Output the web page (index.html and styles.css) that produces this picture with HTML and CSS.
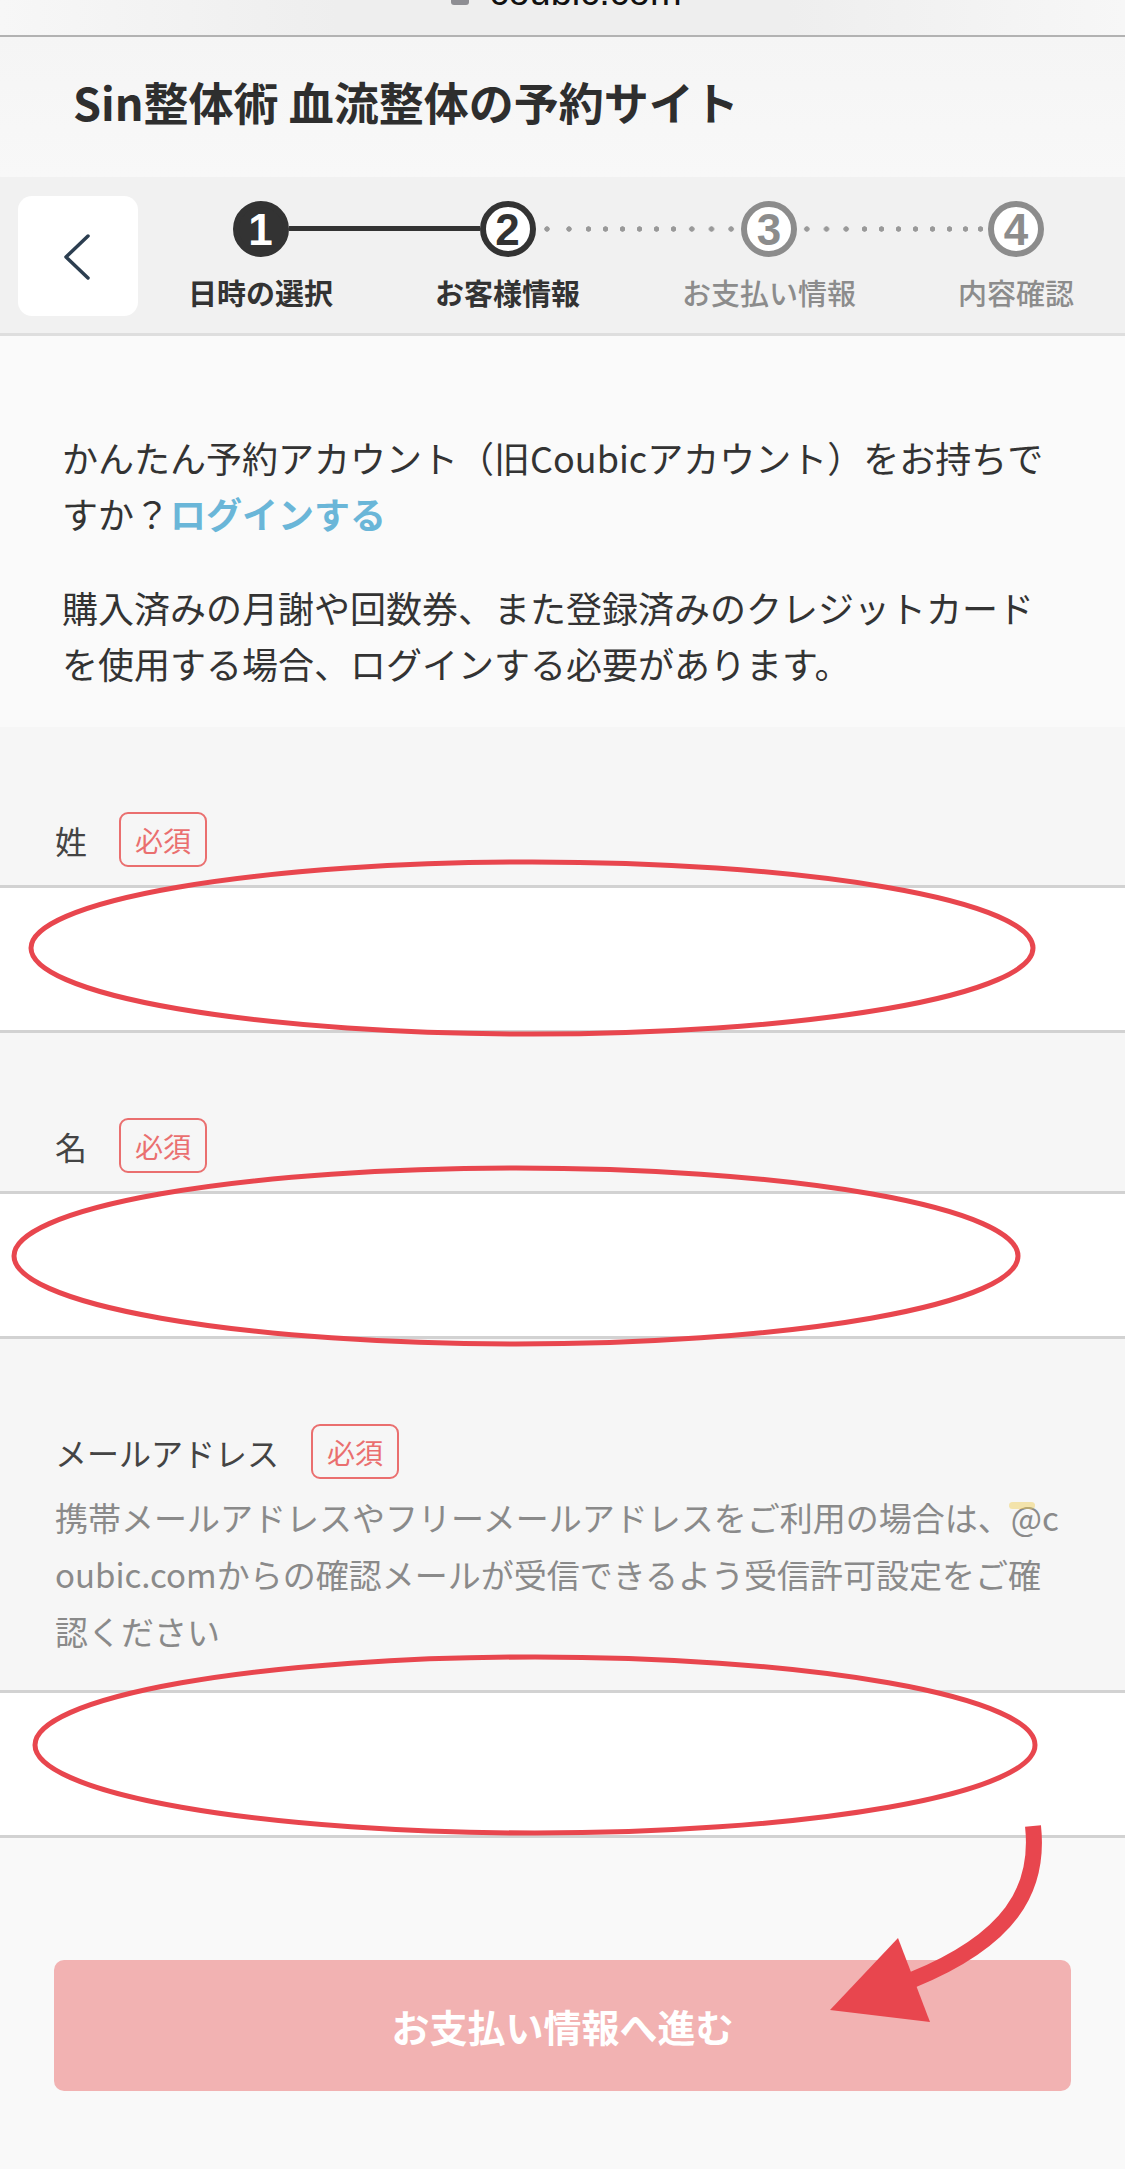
FILE: index.html
```html
<!DOCTYPE html>
<html lang="ja">
<head>
<meta charset="utf-8">
<title>Sin整体術 血流整体の予約サイト</title>
<link rel="stylesheet" href="styles.css">
</head>
<body>
<div class="page">
  <div class="browser-bar">
    <div class="url"><span class="lock"></span>coubic.com</div>
  </div>

  <header class="site-header">
    <h1 class="site-title">Sin整体術 血流整体の予約サイト</h1>
  </header>

  <nav class="stepper">
    <button class="back" type="button" aria-label="戻る">
      <svg width="120" height="120" viewBox="0 0 120 120"><polyline points="70,40 48,61 70,82" fill="none" stroke="#2c3e50" stroke-width="3.5" stroke-linecap="round" stroke-linejoin="round"/></svg>
    </button>
    <div class="steps">
      <div class="cell"><span class="seg"></span><span class="circle done">1</span><span class="seg solid"></span></div>
      <div class="conn solid"></div>
      <div class="cell"><span class="seg solid"></span><span class="circle current">2</span><span class="seg dotted"></span></div>
      <div class="conn dotted"></div>
      <div class="cell"><span class="seg dotted"></span><span class="circle todo">3</span><span class="seg dotted"></span></div>
      <div class="conn dotted"></div>
      <div class="cell"><span class="seg dotted"></span><span class="circle todo">4</span><span class="seg"></span></div>

      <div class="label active">日時の選択</div>
      <div></div>
      <div class="label active">お客様情報</div>
      <div></div>
      <div class="label">お支払い情報</div>
      <div></div>
      <div class="label">内容確認</div>
    </div>
  </nav>

  <section class="intro">
    <p class="intro-text">かんたん予約アカウント（旧Coubicアカウント）をお持ちですか？<a class="login" href="#">ログインする</a></p>
    <p class="intro-text">購入済みの月謝や回数券、また登録済みのクレジットカードを使用する場合、ログインする必要があります。</p>
  </section>

  <section class="form">
    <div class="field">
      <div class="field-head"><span class="field-label">姓</span><span class="badge">必須</span></div>
      <input class="input" type="text">
    </div>
    <div class="field">
      <div class="field-head"><span class="field-label">名</span><span class="badge">必須</span></div>
      <input class="input" type="text">
    </div>
    <div class="field">
      <div class="field-head"><span class="field-label">メールアドレス</span><span class="badge">必須</span></div>
      <p class="hint">携帯メールアドレスやフリーメールアドレスをご利用の場合は、<span class="at">@</span>coubic.comからの確認メールが受信できるよう受信許可設定をご確認ください</p>
      <input class="input input-email" type="email">
    </div>
  </section>

  <footer class="footer">
    <button class="next" type="button">お支払い情報へ進む</button>
  </footer>

  <svg class="annotations" width="1125" height="2169" viewBox="0 0 1125 2169">
    <g fill="none" stroke="#e8464e" stroke-width="5">
      <ellipse cx="532" cy="948" rx="501" ry="86"/>
      <ellipse cx="516" cy="1256" rx="502" ry="88"/>
      <ellipse cx="535" cy="1745" rx="500" ry="88"/>
      <path d="M1033 1826 C1040 1890 1010 1940 912 1980" stroke-width="16"/>
    </g>
    <polygon points="898,1938 830,2010 930,2022" fill="#e8464e"/>
  </svg>
</div>
</body>
</html>
```

FILE: styles.css
```css
html, body {
  margin: 0;
  padding: 0;
}

body {
  font-family: "Noto Sans CJK JP", "Noto Sans", sans-serif;
  color: #333;
  background: #f9f9f9;
}

.page {
  position: relative;
  width: 1125px;
  min-height: 2169px;
  background: #f9f9f9;
  overflow: hidden;
}

/* browser bar */
.browser-bar {
  height: 35px;
  overflow: hidden;
  display: flex;
  justify-content: center;
  background: linear-gradient(90deg, #f7f7f7 0%, #eeeeee 30%, #eeeeee 70%, #f7f7f7 100%);
  border-bottom: 2px solid #b2b2b2;
}

.url {
  margin-top: -27px;
  margin-left: 8px;
  font-family: "Liberation Sans", Arial, sans-serif;
  font-size: 38px;
  line-height: 38px;
  color: #111;
  white-space: nowrap;
}

.lock {
  display: inline-block;
  width: 18px;
  height: 22px;
  margin-right: 20px;
  border-radius: 3px;
  background: #8e8e93;
  vertical-align: baseline;
}

/* header */
.site-header {
  height: 140px;
  box-sizing: border-box;
  padding: 35px 0 0 73px;
  background: linear-gradient(180deg, #f5f5f5 0%, #f8f8f8 100%);
}

.site-title {
  margin: 0;
  font-size: 45px;
  line-height: 60px;
  font-weight: 700;
  color: #2e2e2e;
}

/* stepper */
.stepper {
  display: flex;
  align-items: center;
  padding: 19px 51px 17px 18px;
  background: #f1f1f1;
  border-bottom: 3px solid #dedede;
}

.back {
  flex: none;
  width: 120px;
  height: 120px;
  padding: 0;
  border: 0;
  border-radius: 14px;
  background: #fff;
  display: flex;
  align-items: center;
  justify-content: center;
}

.back svg {
  display: block;
}

.steps {
  flex: 1;
  margin-left: 50px;
  display: grid;
  grid-template-columns: auto 1fr auto 1fr auto 1fr auto;
  grid-template-rows: 56px 40px;
  row-gap: 15px;
  align-items: center;
}

.cell {
  display: flex;
  align-items: center;
  height: 56px;
}

.seg {
  flex: 1;
  height: 6px;
}

.conn {
  height: 6px;
}

.solid {
  background: #333;
  height: 5px;
}

.dotted {
  background-image: radial-gradient(circle, #999 2.4px, transparent 3px);
  background-size: 18px 6px;
  background-repeat: round no-repeat;
  background-position: 0 center;
}

.circle {
  flex: none;
  width: 56px;
  height: 56px;
  box-sizing: border-box;
  border-radius: 50%;
  display: flex;
  align-items: center;
  justify-content: center;
  font-family: "Liberation Sans", Arial, sans-serif;
  font-size: 44px;
  line-height: 1;
  font-weight: 700;
  padding-top: 2px;
}

.circle.done {
  background: #333;
  border: 6px solid #333;
  color: #fff;
}

.circle.current {
  background: #fff;
  border: 6px solid #333;
  color: #333;
}

.circle.todo {
  background: #fff;
  border: 6px solid #8c8c8c;
  color: #8c8c8c;
}

.label {
  font-size: 29px;
  line-height: 40px;
  text-align: center;
  white-space: nowrap;
  color: #8c8c8c;
  font-weight: 500;
}

.label.active {
  color: #333;
  font-weight: 700;
}

/* intro */
.intro {
  background: #fafafa;
  padding: 93px 62px 36px;
}

.intro-text {
  margin: 0;
  font-size: 36px;
  line-height: 56px;
  color: #333;
}

.intro-text + .intro-text {
  margin-top: 38px;
}

.login {
  color: #6ab6d8;
  font-weight: 700;
  text-decoration: none;
}

/* form */
.form {
  background: #f6f6f6;
}

.field {
  padding-top: 85px;
}

.field-head {
  display: flex;
  align-items: center;
  gap: 32px;
  height: 55px;
  padding-left: 55px;
}

.field-label {
  font-size: 32px;
  color: #444;
}

.badge {
  height: 55px;
  width: 88px;
  box-sizing: border-box;
  border: 2px solid #ea6f6f;
  border-radius: 9px;
  color: #ea6f6f;
  font-size: 28px;
  display: flex;
  align-items: center;
  justify-content: center;
}

.hint {
  margin: 10px 0 0;
  padding: 0 62px 0 55px;
  font-size: 33px;
  line-height: 57px;
  color: #8a8a8a;
  word-break: break-all;
}

.at {
  position: relative;
}

.at::before {
  content: "";
  position: absolute;
  left: -2px;
  top: 9px;
  width: 26px;
  height: 7px;
  border-radius: 4px;
  background: rgba(240, 205, 80, 0.45);
}

.input {
  display: block;
  width: 100%;
  height: 148px;
  box-sizing: border-box;
  margin: 18px 0 0;
  padding: 0 55px;
  border: 0;
  border-top: 3px solid #d2d2d2;
  border-bottom: 3px solid #d2d2d2;
  background: #fff;
  font-size: 32px;
  outline: none;
}

.input-email {
  margin-top: 30px;
}

/* footer */
.footer {
  padding: 122px 54px 76px;
  background: #f9f9f9;
}

.next {
  display: block;
  width: 100%;
  height: 131px;
  border: 0;
  border-radius: 10px;
  background: #f2b2b2;
  color: #fff;
  font-family: "Noto Sans CJK JP", sans-serif;
  font-size: 38px;
  font-weight: 700;
}

/* red annotation overlay */
.annotations {
  position: absolute;
  top: 0;
  left: 0;
  pointer-events: none;
}
```
